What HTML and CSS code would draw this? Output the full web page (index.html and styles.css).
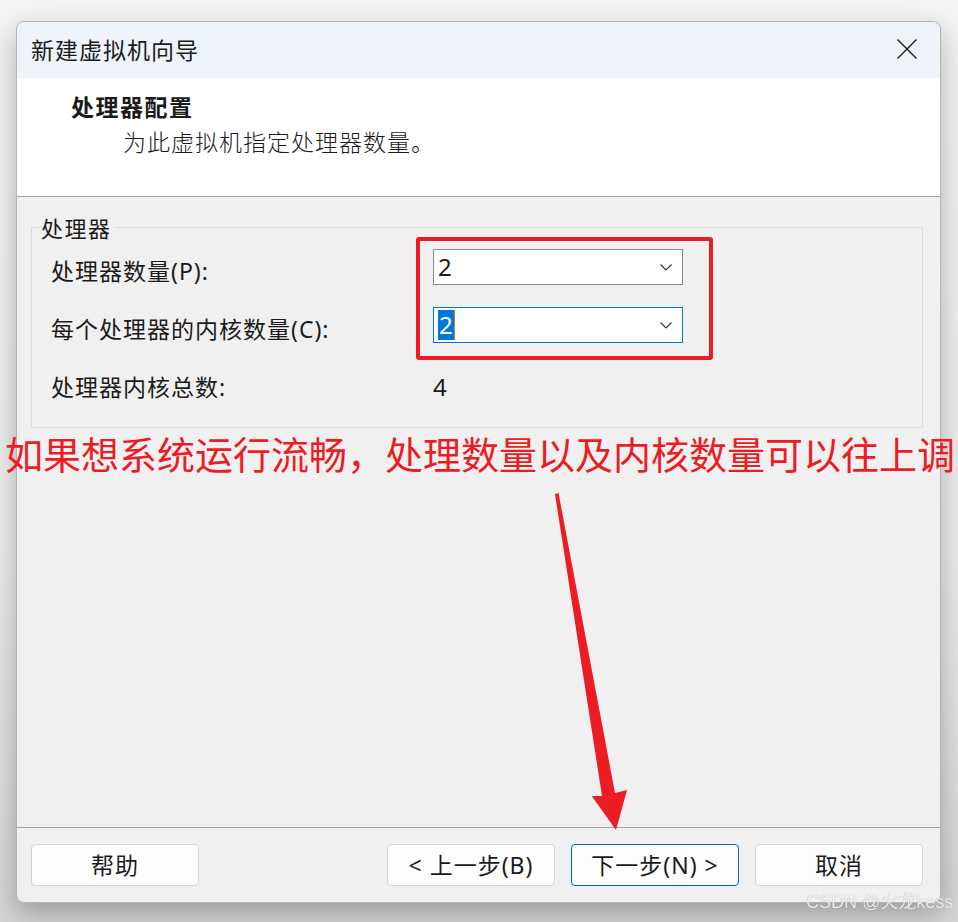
FILE: index.html
```html
<!DOCTYPE html>
<html lang="zh-CN">
<head>
<meta charset="utf-8">
<title>新建虚拟机向导</title>
<link rel="stylesheet" href="styles.css">
</head>
<body>
<div class="window">
  <div class="titlebar">
    <span class="title">新建虚拟机向导</span>
    <svg class="close" width="20" height="20" viewBox="0 0 20 20"><path d="M0.5 0.5 L19.5 19.5 M19.5 0.5 L0.5 19.5" stroke="#1b1b1b" stroke-width="1.4" fill="none"/></svg>
  </div>
  <div class="header">
    <div class="h-title">处理器配置</div>
    <div class="h-sub">为此虚拟机指定处理器数量。</div>
  </div>
  <div class="content">
    <fieldset class="group">
      <legend class="legend">处理器</legend>
      <div class="grid">
        <div class="lbl">处理器数量(P):</div>
        <div class="combo">
          <span class="val">2</span>
          <svg class="chev" width="12" height="7" viewBox="0 0 12 7"><path d="M0.5 0.5 L6 6 L11.5 0.5" stroke="#333" stroke-width="1.1" fill="none"/></svg>
        </div>
        <div class="lbl">每个处理器的内核数量(C):</div>
        <div class="combo focused">
          <span class="val"><span class="sel">2</span></span>
          <svg class="chev" width="12" height="7" viewBox="0 0 12 7"><path d="M0.5 0.5 L6 6 L11.5 0.5" stroke="#333" stroke-width="1.1" fill="none"/></svg>
        </div>
        <div class="lbl">处理器内核总数:</div>
        <div class="total">4</div>
      </div>
    </fieldset>
  </div>
  <div class="footer">
    <button class="btn">帮助</button>
    <div class="btn-group">
      <button class="btn">&lt; 上一步(B)</button>
      <button class="btn primary">下一步(N) &gt;</button>
      <button class="btn">取消</button>
    </div>
  </div>
</div>
<div class="mark-box"></div>
<div class="note">如果想系统运行流畅，处理数量以及内核数量可以往上调</div>
<svg class="arrow" width="100" height="360" viewBox="0 0 100 360"><polygon points="15,14 18.5,13 75,313 87,310 76,350 51.7,316 62,316" fill="#ec1c24"/></svg>
<div class="watermark">CSDN @火龙kess</div>
</body>
</html>
```
FILE: styles.css
```css
html, body {
  margin: 0;
  padding: 0;
}
body {
  width: 958px;
  height: 922px;
  overflow: hidden;
  position: relative;
  box-sizing: border-box;
  padding: 21px 0 0 16px;
  background: linear-gradient(#f4f4f4 0%, #ececec 60%, #d4d4d4 100%);
  font-family: "Noto Sans", "Noto Sans CJK SC", sans-serif;
  color: #1b1b1b;
}
.window {
  width: 925px;
  height: 882px;
  box-sizing: border-box;
  border: 1px solid #b4b4b4;
  border-radius: 8px;
  overflow: hidden;
  display: flex;
  flex-direction: column;
  background: #f0f0f0;
  box-shadow: 0 10px 28px rgba(0, 0, 0, 0.28);
}
.titlebar {
  height: 56px;
  flex: none;
  background: #eef2f9;
  display: flex;
  align-items: center;
  justify-content: space-between;
  padding: 0 23px 0 14px;
}
.title {
  font-size: 23px;
  line-height: 30px;
  letter-spacing: 1px;
  margin-top: -3px;
  font-family: "Noto Sans CJK SC", sans-serif;
}
.close {
  display: block;
  margin-top: -2px;
}
.header {
  height: 118px;
  flex: none;
  background: #ffffff;
  border-bottom: 1px solid #a0a0a0;
  padding: 0;
}
.h-title {
  margin: 13px 0 0 54px;
  font-size: 23px;
  line-height: 30px;
  letter-spacing: 1.5px;
  font-weight: 700;
  font-family: "Noto Sans CJK SC", sans-serif;
}
.h-sub {
  margin: 5px 0 0 106px;
  font-size: 23px;
  line-height: 30px;
  letter-spacing: 1px;
  font-family: "Noto Sans CJK SC", sans-serif;
  font-weight: 300;
}
.content {
  flex: 1;
  background: #f0f0f0;
  padding: 18px 17px 0 14px;
}
.group {
  margin: 0;
  border: 1px solid #dcdcdc;
  padding: 10px 0 26px 7px;
  min-width: 0;
}
.legend {
  padding: 0 2px;
  font-size: 22px;
  line-height: 24px;
  letter-spacing: 1.5px;
  font-family: "Noto Sans CJK SC", sans-serif;
}
.grid {
  margin-left: 12px;
  display: grid;
  grid-template-columns: 382px 250px;
  grid-auto-rows: 36px;
  row-gap: 22px;
  align-items: center;
}
.lbl {
  font-size: 23px;
  line-height: 30px;
  letter-spacing: 1px;
  padding-top: 7px;
  font-family: "Noto Sans", "Noto Sans CJK SC", sans-serif;
}
.combo {
  height: 36px;
  box-sizing: border-box;
  border: 1px solid #8a8a8a;
  background: #ffffff;
  display: flex;
  align-items: center;
  justify-content: space-between;
  padding: 0 10px 0 4px;
}
.combo.focused {
  border-color: #0078d4;
}
.val {
  font-size: 24px;
  line-height: 30px;
  display: flex;
  align-items: center;
}
.sel {
  background: #0078d7;
  color: #ffffff;
  line-height: 30px;
  padding: 0 1px;
  border-right: 1px solid #d8772a;
}
.chev {
  display: block;
}
.total {
  font-size: 24px;
  line-height: 30px;
  padding-top: 7px;
}
.footer {
  flex: none;
  height: 75px;
  border-top: 1px solid #a0a0a0;
  box-sizing: border-box;
  display: flex;
  justify-content: space-between;
  align-items: flex-start;
  padding: 16px 17px 0 14px;
}
.btn-group {
  display: flex;
  gap: 16px;
}
.btn {
  width: 168px;
  height: 42px;
  box-sizing: border-box;
  border: 1px solid #d3d3d3;
  border-radius: 4px;
  background: #fdfdfd;
  font-family: "Noto Sans", "Noto Sans CJK SC", sans-serif;
  font-size: 23px;
  letter-spacing: 1px;
  color: #1b1b1b;
  padding: 0;
  line-height: 40px;
}
.btn.primary {
  border-color: #0067c0;
}
.mark-box {
  position: absolute;
  left: 416px;
  top: 237px;
  width: 297px;
  height: 123px;
  box-sizing: border-box;
  border: 4px solid #ec1c24;
  border-radius: 3px;
}
.note {
  position: absolute;
  left: 5px;
  top: 431px;
  font-size: 38px;
  line-height: 44px;
  color: #ec1c24;
  font-family: "Noto Sans CJK SC", sans-serif;
  white-space: nowrap;
}
.arrow {
  position: absolute;
  left: 540px;
  top: 480px;
}
.watermark {
  position: absolute;
  left: 806px;
  top: 890px;
  font-size: 18px;
  line-height: 24px;
  color: rgba(255, 255, 255, 0.85);
  text-shadow: 0 0 1px rgba(0, 0, 0, 0.35);
  font-family: "Liberation Sans", "Noto Sans CJK SC", sans-serif;
  white-space: nowrap;
}
```
